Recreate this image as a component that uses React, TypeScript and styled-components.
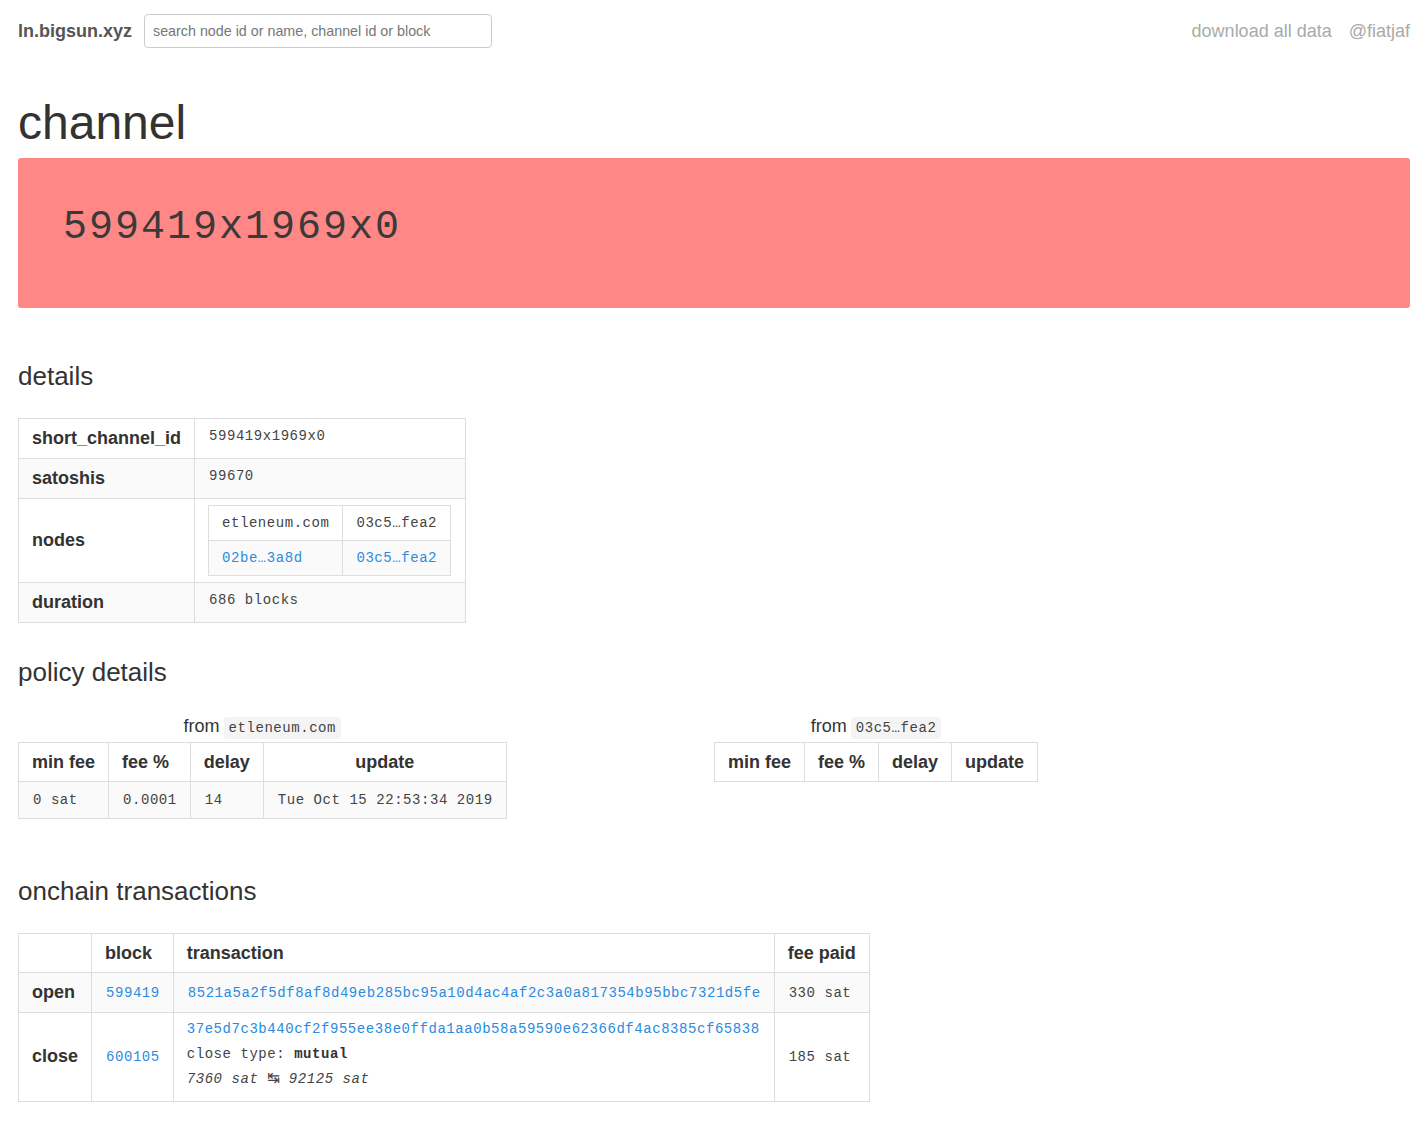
import styled, { createGlobalStyle } from "styled-components";

const GlobalStyle = createGlobalStyle`
  html, body {
    margin: 0;
    padding: 0;
    background: #fff;
  }
  body {
    font-family: "Liberation Sans", Arial, sans-serif;
    color: #333;
  }
`;

const mono = `"Liberation Mono", "Courier New", monospace`;

const Page = styled.div`
  padding: 14px 18px 40px;
`;

const TopBar = styled.nav`
  display: flex;
  align-items: center;
  height: 34px;
`;

const Logo = styled.a`
  font-size: 18px;
  font-weight: bold;
  color: #555;
  text-decoration: none;
  margin-right: 12px;
`;

const Search = styled.input`
  width: 348px;
  height: 34px;
  box-sizing: border-box;
  border: 1px solid #ccc;
  border-radius: 4px;
  padding: 0 8px;
  font-family: "Liberation Sans", Arial, sans-serif;
  font-size: 14.3px;
  color: #333;
  &::placeholder {
    color: #777;
  }
`;

const NavRight = styled.div`
  margin-left: auto;
  display: flex;
  gap: 17px;
`;

const NavLink = styled.a`
  font-size: 18px;
  color: #aaa;
  text-decoration: none;
`;

const Title = styled.h1`
  font-size: 48px;
  font-weight: normal;
  margin: 49px 0 9px;
  line-height: 52px;
  color: #333;
`;

const Banner = styled.div`
  background: #ff8887;
  border-radius: 3px;
  height: 150px;
  display: flex;
  align-items: center;
  padding: 0 45px 12px;
  box-sizing: border-box;
  font-family: ${mono};
  font-size: 40px;
  letter-spacing: 2px;
  color: #3a3a3a;
`;

const SectionTitle = styled.h2<{ $top: number }>`
  font-size: 26px;
  font-weight: normal;
  margin: ${(p) => p.$top}px 0 0;
  line-height: 32px;
  color: #333;
`;

const Table = styled.table`
  border-collapse: collapse;
  border: 1px solid #ddd;
  tr:nth-child(even) > td,
  tr:nth-child(even) > th {
    background: #fafafa;
  }
`;

const Th = styled.th<{ $center?: boolean }>`
  border: 1px solid #ddd;
  padding: 0 13px;
  height: 39px;
  box-sizing: border-box;
  font-size: 18px;
  font-weight: bold;
  text-align: ${(p) => (p.$center ? "center" : "left")};
  color: #333;
`;

const Td = styled.td<{ $pad?: string; $h?: number }>`
  border: 1px solid #ddd;
  padding: ${(p) => p.$pad ?? "0 13px 0 14px"};
  height: ${(p) => p.$h ?? 39}px;
  font-family: ${mono};
  font-size: 14px;
  letter-spacing: 0.55px;
  color: #444;
  vertical-align: middle;
`;

const RaisedTd = styled(Td)`
  padding-bottom: 5px;
  height: 34px;
`;

const InnerTable = styled.table`
  border-collapse: collapse;
  border: 1px solid #ddd;
  td {
    border: 1px solid #ddd;
    padding: 0 13px;
    height: 34px;
    font-family: ${mono};
    font-size: 14px;
    letter-spacing: 0.55px;
    color: #444;
    background: #fff;
  }
`;

const Link = styled.a`
  color: #2a8be0;
  text-decoration: none;
`;

const DetailsWrap = styled.div`
  margin-top: 26px;
`;

const PolicyGrid = styled.div`
  display: grid;
  grid-template-columns: 1fr 1fr;
  margin-top: 27px;
  align-items: start;
`;

const PolicyBlock = styled.div`
  display: inline-flex;
  flex-direction: column;
  align-items: stretch;
  justify-self: start;
`;

const Caption = styled.div`
  text-align: center;
  font-size: 18px;
  line-height: 22px;
  margin-bottom: 3px;
`;

const Code = styled.code`
  background: #f4f4f4;
  border-radius: 3px;
  padding: 3px 5px;
  font-family: ${mono};
  font-size: 14px;
  letter-spacing: 0.55px;
  color: #444;
  margin-left: 4px;
`;

const TxWrap = styled.div`
  margin-top: 26px;
`;

const TxLine = styled.div`
  line-height: 24.5px;
`;

const Bold = styled.b`
  font-weight: bold;
  color: #333;
`;

const Italic = styled.i`
  font-style: italic;
`;

const Swap = styled.span`
  font-family: "DejaVu Sans", sans-serif;
  font-size: 15px;
  letter-spacing: 0;
`;

function PolicyTable({ from, rows }: { from: string; rows: string[][] }) {
  return (
    <PolicyBlock>
      <Caption>
        from<Code>{from}</Code>
      </Caption>
      <Table>
        <tbody>
          <tr>
            <Th>min fee</Th>
            <Th>fee %</Th>
            <Th>delay</Th>
            <Th $center>update</Th>
          </tr>
          {rows.map((r, i) => (
            <tr key={i}>
              {r.map((c, j) => (
                <Td key={j} $h={36}>
                  {c}
                </Td>
              ))}
            </tr>
          ))}
        </tbody>
      </Table>
    </PolicyBlock>
  );
}

export default function App() {
  return (
    <>
      <GlobalStyle />
      <Page>
        <TopBar>
          <Logo href="#">ln.bigsun.xyz</Logo>
          <Search placeholder="search node id or name, channel id or block" />
          <NavRight>
            <NavLink href="#">download all data</NavLink>
            <NavLink href="#">@fiatjaf</NavLink>
          </NavRight>
        </TopBar>

        <Title>channel</Title>
        <Banner>599419x1969x0</Banner>

        <SectionTitle $top={52}>details</SectionTitle>
        <DetailsWrap>
          <Table>
            <tbody>
              <tr>
                <Th style={{ width: 176 }}>short_channel_id</Th>
                <RaisedTd style={{ width: 243 }}>599419x1969x0</RaisedTd>
              </tr>
              <tr>
                <Th>satoshis</Th>
                <RaisedTd>99670</RaisedTd>
              </tr>
              <tr>
                <Th>nodes</Th>
                <Td $pad="6px 13px 6px 13px">
                  <InnerTable>
                    <tbody>
                      <tr>
                        <td>etleneum.com</td>
                        <td>03c5…fea2</td>
                      </tr>
                      <tr>
                        <td>
                          <Link href="#">02be…3a8d</Link>
                        </td>
                        <td>
                          <Link href="#">03c5…fea2</Link>
                        </td>
                      </tr>
                    </tbody>
                  </InnerTable>
                </Td>
              </tr>
              <tr>
                <Th>duration</Th>
                <RaisedTd>686 blocks</RaisedTd>
              </tr>
            </tbody>
          </Table>
        </DetailsWrap>

        <SectionTitle $top={33}>policy details</SectionTitle>
        <PolicyGrid>
          <PolicyTable
            from="etleneum.com"
            rows={[["0 sat", "0.0001", "14", "Tue Oct 15 22:53:34 2019"]]}
          />
          <PolicyTable from="03c5…fea2" rows={[]} />
        </PolicyGrid>

        <SectionTitle $top={56}>onchain transactions</SectionTitle>
        <TxWrap>
          <Table>
            <tbody>
              <tr>
                <Th style={{ width: 73 }}></Th>
                <Th>block</Th>
                <Th>transaction</Th>
                <Th>fee paid</Th>
              </tr>
              <tr>
                <Th>open</Th>
                <Td>
                  <Link href="#">599419</Link>
                </Td>
                <Td>
                  <Link href="#">
                    8521a5a2f5df8af8d49eb285bc95a10d4ac4af2c3a0a817354b95bbc7321d5fe
                  </Link>
                </Td>
                <Td>330 sat</Td>
              </tr>
              <tr>
                <Th>close</Th>
                <Td>
                  <Link href="#">600105</Link>
                </Td>
                <Td $pad="4px 13px 9px">
                  <TxLine>
                    <Link href="#">
                      37e5d7c3b440cf2f955ee38e0ffda1aa0b58a59590e62366df4ac8385cf65838
                    </Link>
                  </TxLine>
                  <TxLine>
                    close type: <Bold>mutual</Bold>
                  </TxLine>
                  <TxLine>
                    <Italic>7360 sat</Italic> <Swap>↹</Swap>{" "}
                    <Italic>92125 sat</Italic>
                  </TxLine>
                </Td>
                <Td>185 sat</Td>
              </tr>
            </tbody>
          </Table>
        </TxWrap>
      </Page>
    </>
  );
}
